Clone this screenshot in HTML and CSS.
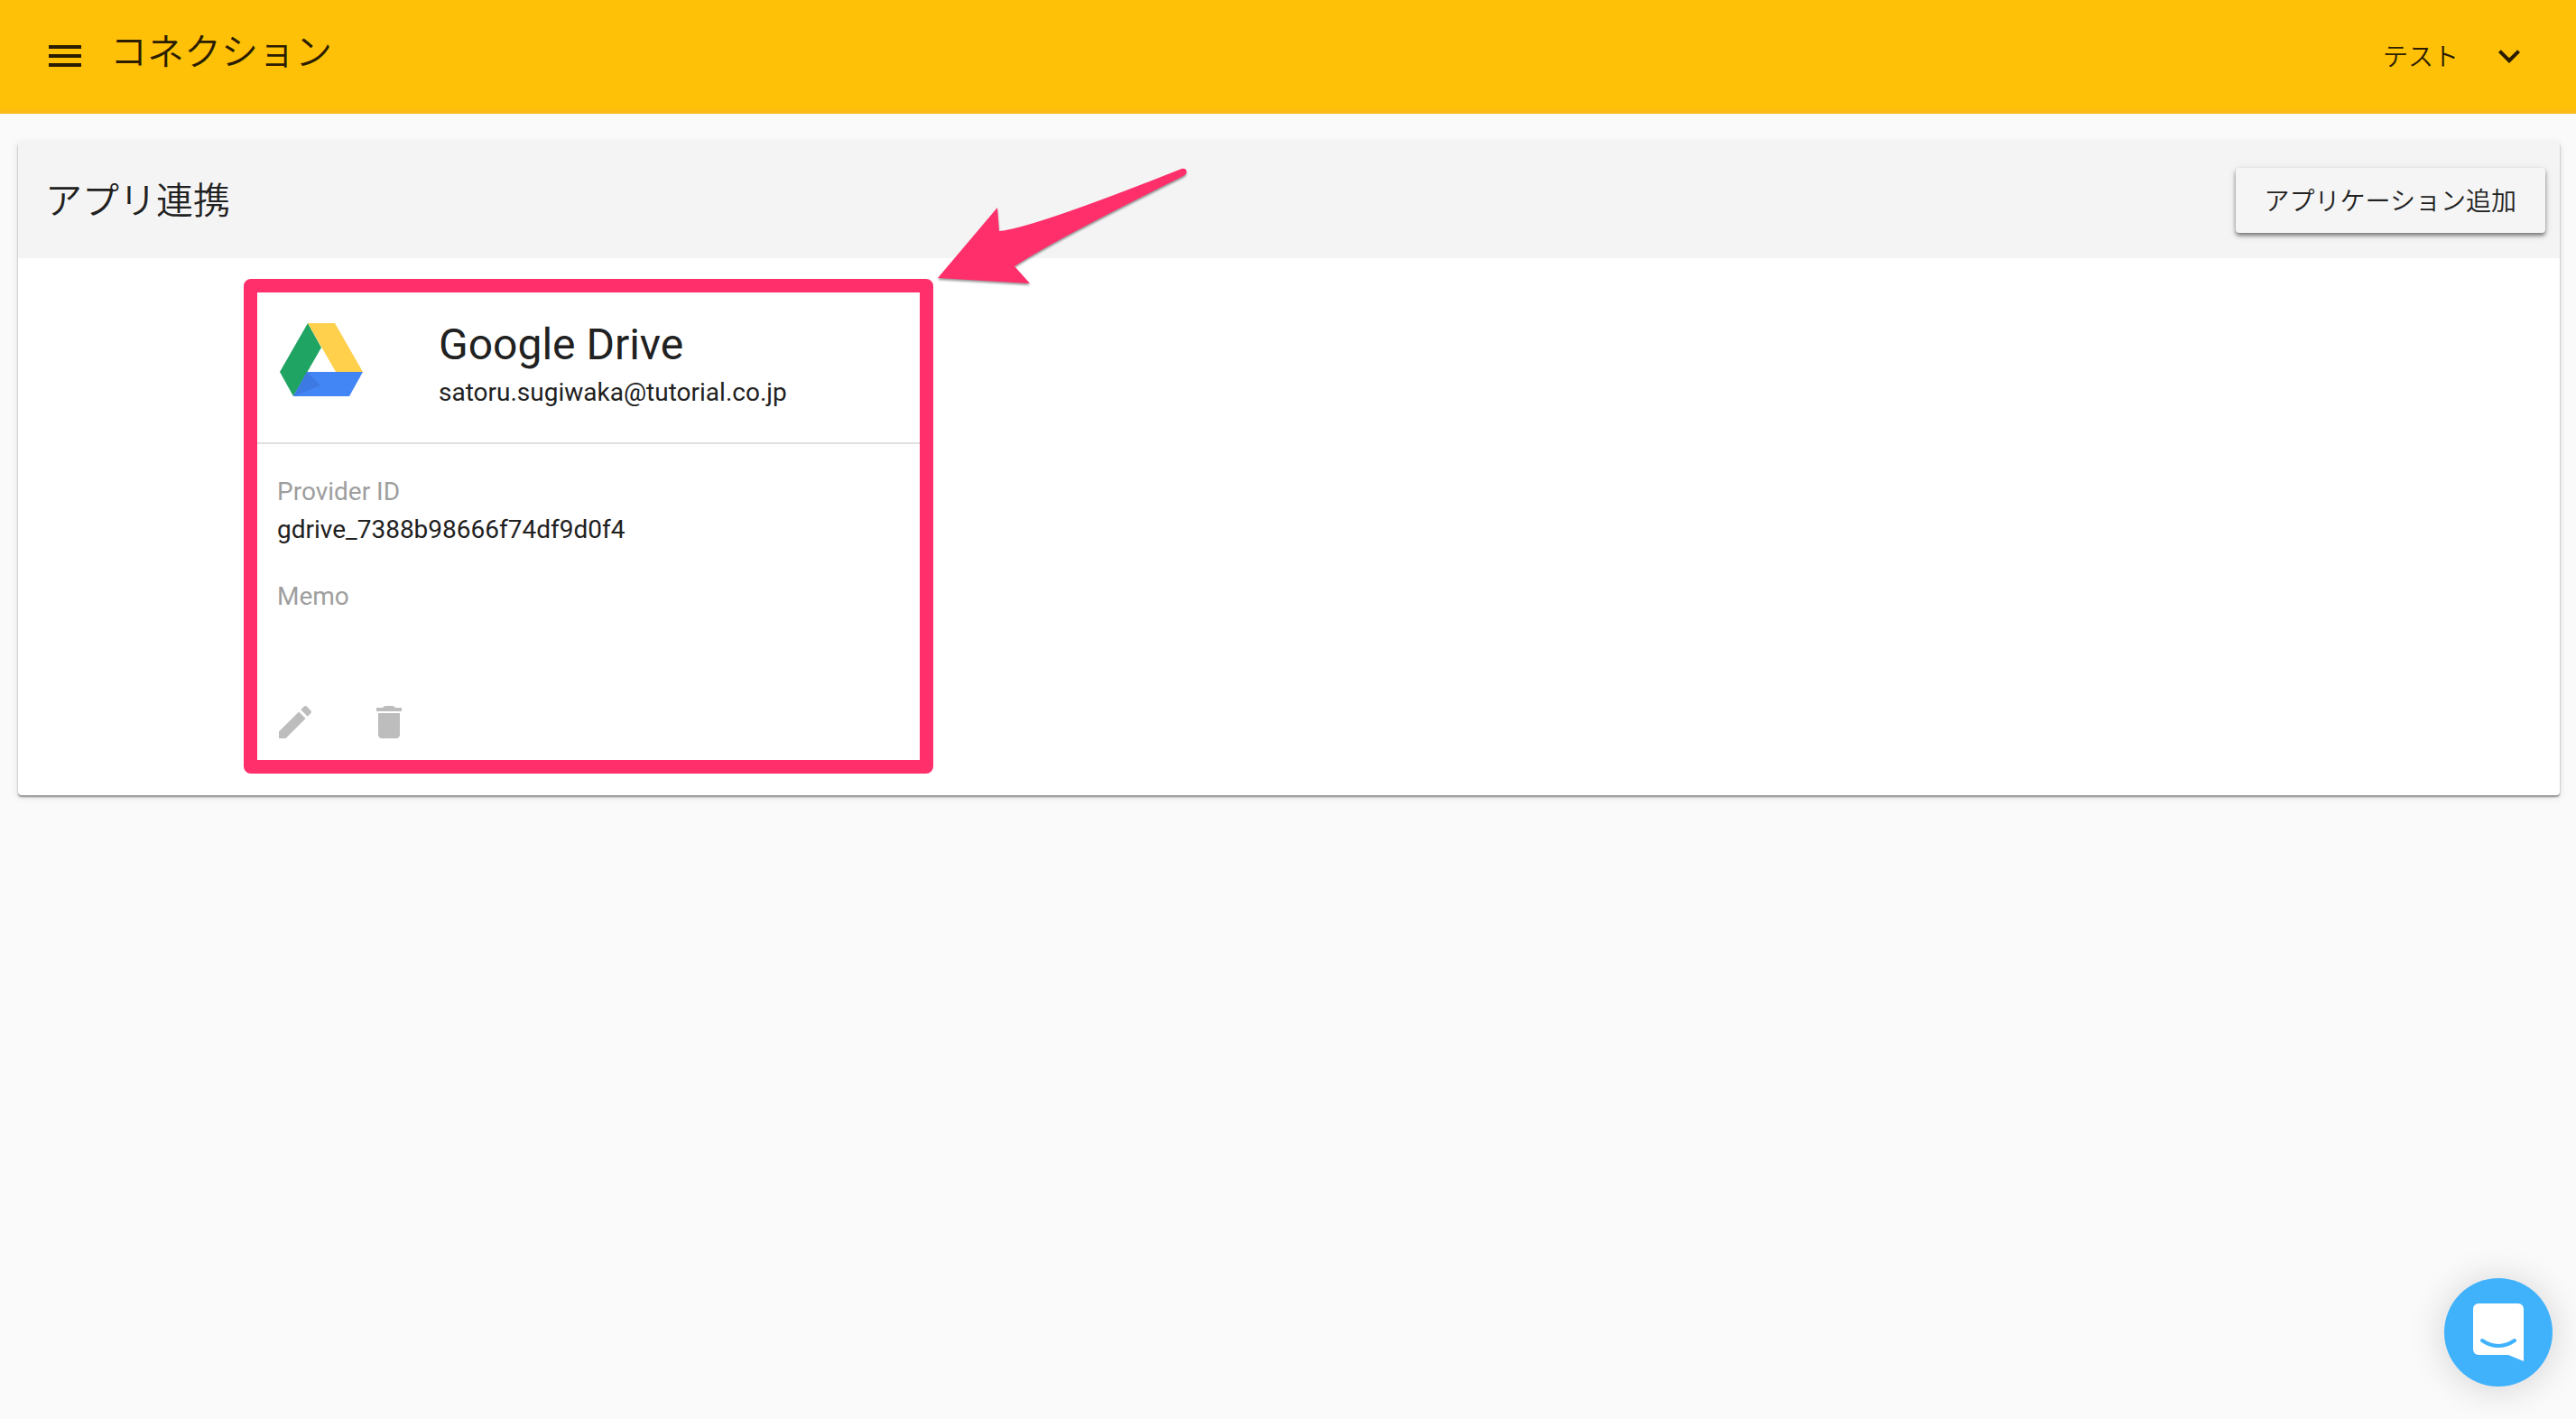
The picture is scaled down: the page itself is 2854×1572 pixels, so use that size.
FILE: index.html
```html
<!DOCTYPE html>
<html lang="ja">
<head>
<meta charset="utf-8">
<meta name="viewport" content="width=device-width, initial-scale=1">
<title>コネクション</title>
<link rel="stylesheet" href="styles.css">
</head>
<body>
<header class="toolbar">
  <button class="icon-button" type="button" aria-label="メニュー">
    <svg class="icon" viewBox="0 0 24 24"><path d="M3 18h18v-2H3v2zm0-5h18v-2H3v2zm0-7v2h18V6H3z"/></svg>
  </button>
  <h1 class="toolbar-title">コネクション</h1>
  <button class="account" type="button">
    <span>テスト</span>
    <svg class="icon" viewBox="0 0 24 24"><path d="M16.59 8.59 12 13.17 7.41 8.59 6 10l6 6 6-6z"/></svg>
  </button>
</header>

<main class="panel">
  <div class="panel-header">
    <h2 class="panel-title">アプリ連携</h2>
    <button class="raised-button" type="button">アプリケーション追加</button>
  </div>
  <div class="panel-body">
    <article class="card">
      <div class="card-header">
        <svg class="card-logo" viewBox="0 0 92 82" aria-hidden="true">
          <path fill="#1fa463" d="M31 0 0 54l15 27 31-54z"/>
          <path fill="#ffd04b" d="M31 0h30l31 54H62z"/>
          <path fill="#4285f4" d="M30 54h62L77 81H15z"/>
          <path fill="#3a71d6" opacity=".6" d="M30 54 15 81l30-12z"/>
        </svg>
        <div>
          <h3 class="card-title">Google Drive</h3>
          <p class="card-text">satoru.sugiwaka@tutorial.co.jp</p>
        </div>
      </div>
      <dl class="card-fields">
        <dt>Provider ID</dt>
        <dd>gdrive_7388b98666f74df9d0f4</dd>
        <dt>Memo</dt>
        <dd></dd>
      </dl>
      <div class="card-actions">
        <button class="icon-button" type="button" aria-label="編集">
          <svg class="icon" viewBox="0 0 24 24"><path d="M3 17.25V21h3.75L17.81 9.94l-3.75-3.75L3 17.25zM20.71 7.04a1 1 0 0 0 0-1.41l-2.34-2.34a1 1 0 0 0-1.41 0l-1.83 1.83 3.75 3.75 1.83-1.83z"/></svg>
        </button>
        <button class="icon-button" type="button" aria-label="削除">
          <svg class="icon" viewBox="0 0 24 24"><path d="M6 19c0 1.100.900 2 2 2h8c1.100 0 2-.900 2-2V7H6v12zM19 4h-3.500l-.500-.500q-.500-.500-1-.500h-4q-.500 0-1 .500l-.500.500H5v2h14V4z"/></svg>
        </button>
      </div>
      <div class="highlight"></div>
      <svg class="arrow" viewBox="0 0 280 132" aria-hidden="true">
        <path d="M0 123 66 45 68 71Q104 68 270 2C276 0 278 7 272 10Q134 78 85 110L102 129Z"/>
      </svg>
    </article>
  </div>
</main>

<button class="chat" type="button" aria-label="チャット">
  <svg class="chat-icon" viewBox="0 0 56 64">
    <path fill="#fff" d="M6 0h44a6 6 0 0 1 6 6v58l-17-7H6a6 6 0 0 1-6-6V6a6 6 0 0 1 6-6z"/>
    <path fill="none" stroke="#40b2fb" stroke-width="4" stroke-linecap="round" d="M10 41q18 12 36 0"/>
  </svg>
</button>
</body>
</html>
```
FILE: styles.css
```css
* { box-sizing: border-box; }

body {
  margin: 0;
  min-height: 100vh;
  background: #fafafa;
  color: #212121;
  font: 400 28px/42px Roboto, "Noto Sans CJK JP", sans-serif;
}

h1, h2, h3, p, dl, dd { margin: 0; font-weight: 400; }

button {
  padding: 0;
  border: 0;
  background: none;
  color: inherit;
  font: inherit;
  cursor: pointer;
}

.icon {
  display: block;
  width: 48px;
  height: 48px;
  fill: currentColor;
}

.toolbar {
  display: flex;
  align-items: center;
  gap: 26px;
  height: 126px;
  padding: 0 50px 2px 48px;
  background: #ffc107;
  box-shadow: inset 0 -6px 4px -2px #fbbc1c;
  color: #2b1d00;
}

.toolbar-title {
  flex: 1;
  padding-bottom: 16px;
}

.account {
  display: flex;
  align-items: center;
  gap: 32px;
}

.account span { padding-bottom: 2px; }

.panel {
  margin: 31px 18px 0 20px;
  border-radius: 4px;
  background: #fff;
  box-shadow: 0 2px 2px rgba(0, 0, 0, .4), 0 2px 8px rgba(0, 0, 0, .12);
}

.panel-header {
  display: flex;
  align-items: center;
  justify-content: space-between;
  height: 129px;
  padding: 0 16px 0 30px;
  border-radius: 4px 4px 0 0;
  background: #f4f4f4;
}

.panel-title { padding-bottom: 6px; }

.toolbar-title,
.panel-title {
  font-size: 41px;
  line-height: 60px;
}

.raised-button {
  height: 72px;
  padding: 0 32px 2px;
  border-radius: 4px;
  background: #f5f5f5;
  box-shadow: 0 3px 4px rgba(0, 0, 0, .45), 0 2px 10px rgba(0, 0, 0, .12);
}

.toolbar-title,
.panel-title,
.account,
.raised-button {
  font-family: "Noto Sans CJK JP", sans-serif;
  font-weight: 350;
}

.panel-body { padding: 38px 265px 39px; }

.card {
  position: relative;
  max-width: 734px;
}

.card-header {
  display: flex;
  gap: 84px;
  height: 168px;
  padding: 34px 25px 0;
  border-bottom: 2px solid #e0e0e0;
}

.card-logo {
  width: 92px;
  height: 82px;
}

.card-title {
  margin-bottom: 8px;
  font-size: 48px;
  line-height: 48px;
}

.card-fields {
  height: 260px;
  padding: 32px 22px 0;
}

.card-fields dt { color: #9e9e9e; }
.card-fields dd { margin-bottom: 32px; }

.card-actions {
  display: flex;
  align-items: flex-start;
  gap: 56px;
  height: 90px;
  padding: 24px 18px 0;
  color: #bdbdbd;
}

.highlight {
  position: absolute;
  inset: -15px;
  border: 15px solid #ff2f6b;
  border-radius: 8px;
  pointer-events: none;
}

.arrow {
  position: absolute;
  left: 754px;
  top: -139px;
  width: 280px;
  height: 132px;
  overflow: visible;
  fill: #ff2f6b;
  filter: drop-shadow(0 2px 1px rgba(0, 0, 0, .4));
  pointer-events: none;
}

.chat {
  position: fixed;
  right: 26px;
  bottom: 36px;
  display: grid;
  place-items: center;
  width: 120px;
  height: 120px;
  border-radius: 50%;
  background: #40b2fb;
  box-shadow: 0 2px 40px rgba(0, 0, 0, .16);
}

.chat-icon {
  width: 56px;
  height: 64px;
}
```
